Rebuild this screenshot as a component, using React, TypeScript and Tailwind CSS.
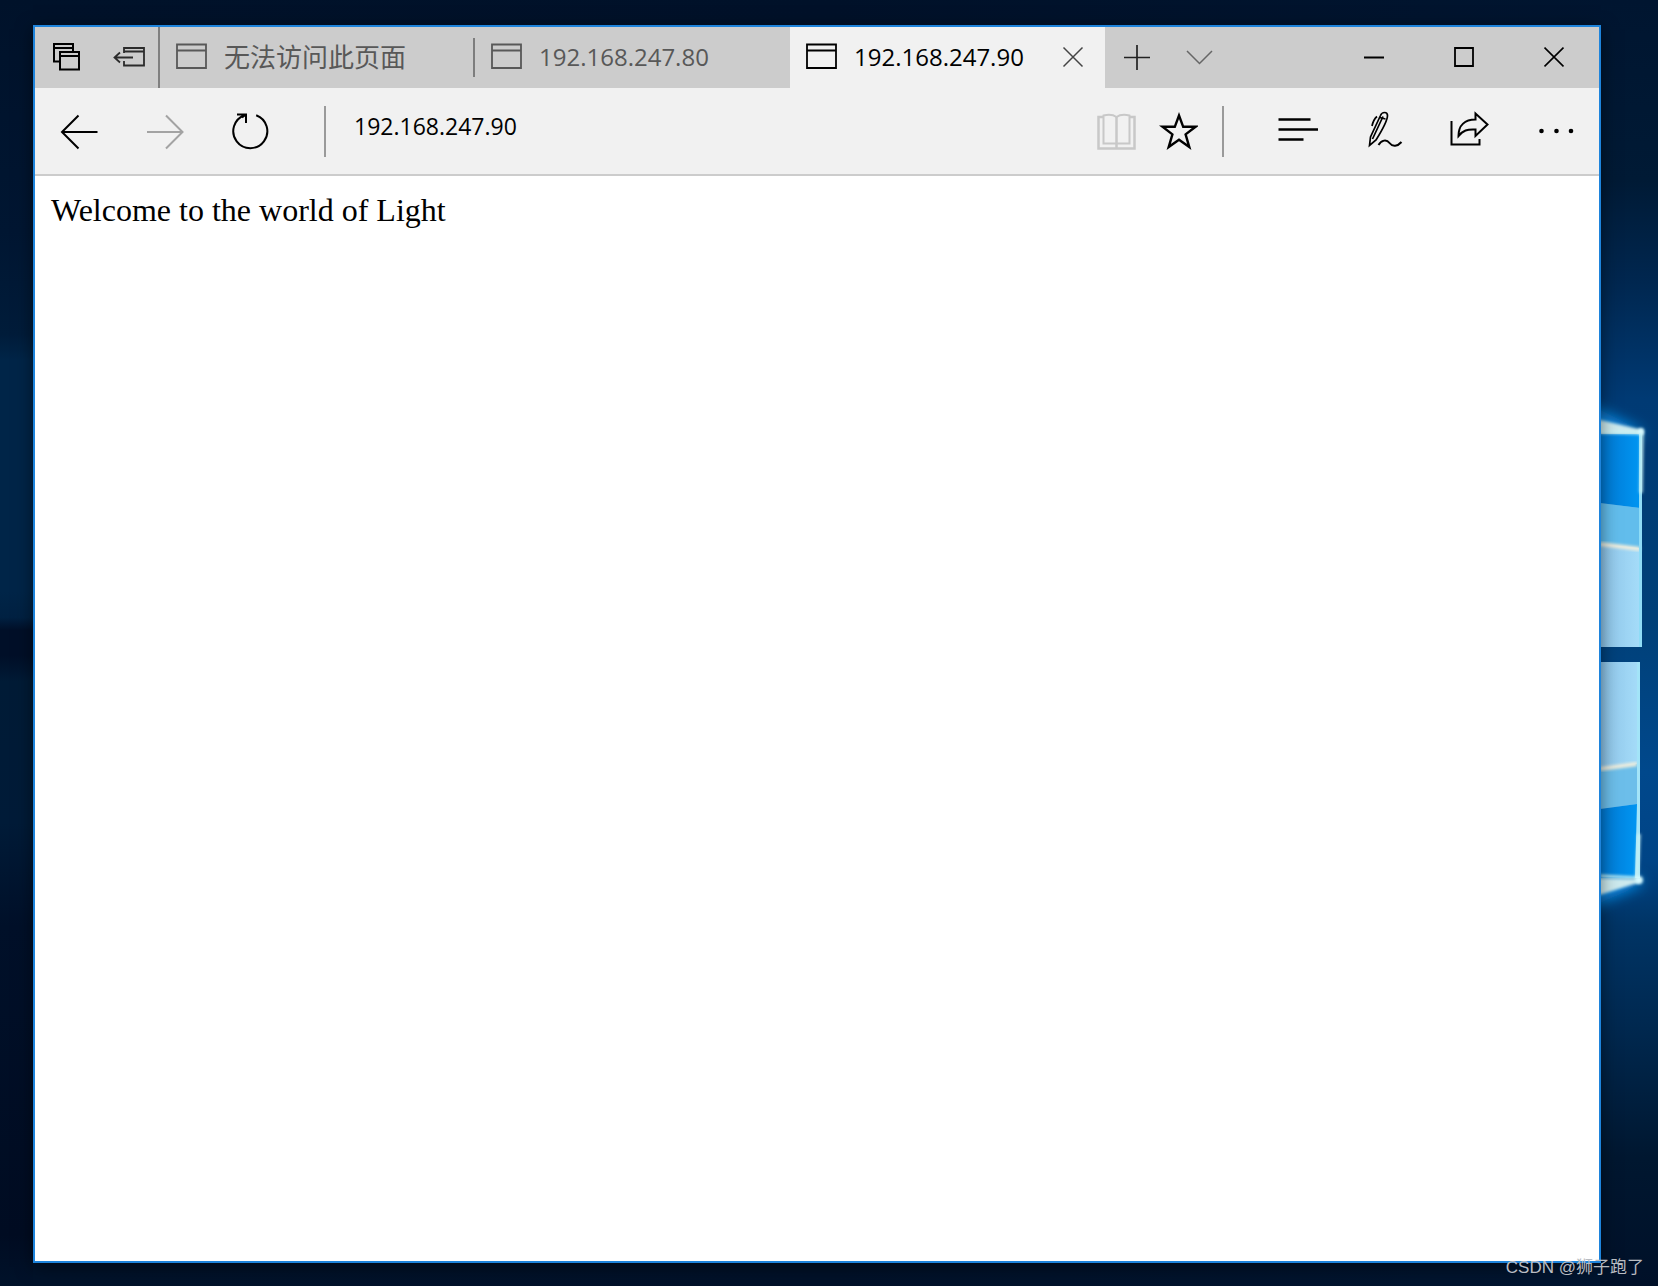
import React, { useState } from 'react';
import clsx from 'clsx';

const UI_FONT = "font-['Open_Sans','Noto_Sans_CJK_SC',sans-serif]";

const TABS = [
  { id: 'error', title: '无法访问此页面' },
  { id: 'host80', title: '192.168.247.80' },
  { id: 'host90', title: '192.168.247.90' },
];

interface IconProps {
  w?: number;
  h?: number;
  children: React.ReactNode;
}

// Stroke icon on its own pixel grid: 40x40 in the toolbar, 31 high in the title bar
const Icon: React.FC<IconProps> = ({ w = 40, h = 40, children }) => (
  <svg
    width={w}
    height={h}
    viewBox={`0 0 ${w} ${h}`}
    fill="none"
    stroke="currentColor"
    strokeWidth="2"
    className="shrink-0"
    aria-hidden="true"
  >
    {children}
  </svg>
);

interface BarButtonProps {
  label: string;
  className: string;
  disabled?: boolean;
  onClick?: () => void;
  children: React.ReactNode;
}

const BarButton: React.FC<BarButtonProps> = ({ label, className, disabled, onClick, children }) => (
  <button
    type="button"
    aria-label={label}
    disabled={disabled}
    onClick={onClick}
    className={clsx('flex h-full shrink-0 items-center justify-center', className)}
  >
    {children}
  </button>
);

const PageIcon = () => (
  <Icon w={32} h={31}>
    <path d="M1 2.500h29v23.500H1zM1 8.500h29" strokeWidth="1.8" />
  </Icon>
);

const TitleBar: React.FC<{ active: string; onSelect: (id: string) => void }> = ({ active, onSelect }) => (
  <div className="flex h-[61px] shrink-0 items-stretch bg-[#cccccc] text-black">
    <BarButton label="Tabs you've set aside" className="w-[62px]">
      <Icon w={32} h={31}>
        <path d="M9 19.500H4V2h19v7M4 6h19" />
        <path d="M10 10h19v17.500H10zM10 14h19" />
      </Icon>
    </BarButton>
    <BarButton label="Set these tabs aside" className="w-[61px] text-[#2b2b2b]">
      <Icon w={35} h={31}>
        <path d="M14 11V6h20v17.500H14V19M14 9.500h20M5 15.500h18M10 10.500l-5.500 5 5.500 5" strokeWidth="1.8" />
      </Icon>
    </BarButton>
    <div className="w-0.5 bg-[#808080]" />

    <div role="tablist" className="flex min-w-0">
      {TABS.map((tab, i) => {
        const isActive = tab.id === active;
        return (
          <div
            key={tab.id}
            className={clsx(
              'flex w-[315px] items-center',
              isActive ? 'bg-[#f1f1f1] text-black' : 'text-[#585858]',
            )}
          >
            <button
              type="button"
              role="tab"
              aria-selected={isActive}
              onClick={() => onSelect(tab.id)}
              className="flex h-full min-w-0 flex-1 items-center gap-4 pl-4 text-left"
            >
              <PageIcon />
              <span className={clsx('pb-0.5 leading-8 whitespace-nowrap', i === 0 ? 'text-[26px]' : 'text-[24px]')}>
                {tab.title}
              </span>
            </button>
            {isActive && (
              <button type="button" aria-label="Close tab" className="h-full pr-[21px] text-[#444]">
                <Icon w={22} h={31}>
                  <path d="M1.500 5.500l19 19M20.500 5.500l-19 19" strokeWidth="1.5" />
                </Icon>
              </button>
            )}
            {i === 0 && <div className="h-[39px] w-0.5 bg-[#7d7d7d]" />}
          </div>
        );
      })}
    </div>

    <BarButton label="New tab" className="w-[63px] text-[#222]">
      <Icon w={27} h={31}>
        <path d="M1 15.500h26M14 3v25" strokeWidth="1.7" />
      </Icon>
    </BarButton>
    <BarButton label="Show tab previews" className="w-[63px] text-[#666]">
      <Icon w={27} h={31}>
        <path d="M1 9l12.500 12.500L26 9" strokeWidth="1.5" />
      </Icon>
    </BarButton>

    <div className="flex-1" />

    <BarButton label="Minimize" className="w-[90px]">
      <Icon w={20} h={31}>
        <path d="M0 15.500h20" />
      </Icon>
    </BarButton>
    <BarButton label="Maximize" className="w-[90px]">
      <Icon w={20} h={31}>
        <path d="M1 6h18v18H1z" strokeWidth="1.8" />
      </Icon>
    </BarButton>
    <BarButton label="Close window" className="w-[90px]">
      <Icon w={20} h={31}>
        <path d="M.5 5.500l19 19M19.500 5.500l-19 19" strokeWidth="1.7" />
      </Icon>
    </BarButton>
  </div>
);

const Toolbar: React.FC = () => {
  const [address, setAddress] = useState('192.168.247.90');

  return (
    <div className="flex h-[88px] shrink-0 items-center border-b-2 border-[#cccccc] bg-[#f1f1f1] text-black">
      <BarButton label="Back" className="w-[86px]">
        <Icon>
          <path d="M3.500 21h36M20.500 4.500L4 21l16.500 16.500" />
        </Icon>
      </BarButton>
      <BarButton label="Forward" className="w-[86px] text-[#a3a3a3]" disabled>
        <Icon>
          <path d="M3 21h36M22 4.500L38.500 21 22 37.500" />
        </Icon>
      </BarButton>
      <BarButton label="Refresh" className="w-[86px]">
        <Icon>
          <path d="M26.200 4.200A17 17 0 1 1 14.400 4.200M7 3.500h9v8.500M16 3.500l-4 3" />
        </Icon>
      </BarButton>
      <div className="ml-[31px] h-[51px] w-0.5 shrink-0 bg-[#9a9a9a]" />
      <input
        type="text"
        aria-label="Address"
        value={address}
        onChange={(e) => setAddress(e.target.value)}
        className="h-full min-w-0 flex-1 bg-transparent pb-2.5 pl-7 text-[23px] leading-8 outline-none"
      />
      <BarButton label="Reading view" className="w-[62px] text-[#c8c8c8]" disabled>
        <Icon>
          <path d="M7 6H2.500v31.500h36V6H34M20.500 6v31.500" strokeWidth="2.5" />
          <path d="M20.500 6C17 3.500 12 3.500 7.500 4.500V32.500H33.500V4.500C29 3.500 24 3.500 20.500 6z" />
        </Icon>
      </BarButton>
      <BarButton label="Add to favorites" className="w-[62px]">
        <Icon>
          <path
            d="M21 4.500l4.200 11.300h12.300l-9.900 7.600 3.700 12.700L21 28.800l-10.300 7.300 3.700-12.700-9.900-7.600h12.300z"
            strokeWidth="2.4"
          />
        </Icon>
      </BarButton>
      <div className="mr-[31px] ml-[13px] h-[51px] w-0.5 shrink-0 bg-[#9a9a9a]" />
      <BarButton label="Hub" className="w-[86px]">
        <Icon>
          <path d="M.5 8.500h32M.5 18.500h39.500M.5 28.500h25" strokeWidth="2.4" />
        </Icon>
      </BarButton>
      <BarButton label="Make a web note" className="w-[86px]">
        <Icon>
          <path
            d="M5.500 34.500L6.500 26 16.500 4.500C18 .5 23.500.5 23.500 4.500 23.500 9 17 21 12 29zM15.500 6.500l6 1.500M13 5.500c-3 2.500-4 5-5 9.500M19 5.500L8.500 28"
            strokeWidth="1.7"
          />
          <path d="M14.500 34c3-5 8-6 11-2s8 3.500 12-1" />
        </Icon>
      </BarButton>
      <BarButton label="Share" className="w-[86px]">
        <Icon>
          <path d="M1.500 10v23.500h28V28" />
          <path d="M8.500 25C8.500 14 15 8.500 25.500 8.500V2.500L37.500 13.500 25.500 25V18.500C17 18 13 19.500 8.500 25z" />
        </Icon>
      </BarButton>
      <BarButton label="More" className="w-[86px]">
        <Icon>
          <g fill="currentColor" stroke="none">
            <circle cx="5.500" cy="20" r="2.300" />
            <circle cx="20.500" cy="20" r="2.300" />
            <circle cx="35" cy="20" r="2.300" />
          </g>
        </Icon>
      </BarButton>
    </div>
  );
};

// Light beam with the right edge of the logo panes, seen beside the window
const WallpaperLogo = () => (
  <svg
    viewBox="0 0 58 1286"
    preserveAspectRatio="xMaxYMid slice"
    className="absolute top-0 right-0 h-full w-[58px]"
    aria-hidden="true"
  >
    <defs>
      <linearGradient id="sky" x1="0" y1="0" x2="0" y2="1">
        <stop offset="0" stopColor="#001530" />
        <stop offset=".14" stopColor="#001a35" />
        <stop offset=".22" stopColor="#002750" />
        <stop offset=".31" stopColor="#003a74" />
        <stop offset=".48" stopColor="#004078" />
        <stop offset=".6" stopColor="#00488c" />
        <stop offset=".67" stopColor="#004486" />
        <stop offset=".72" stopColor="#003465" />
        <stop offset=".8" stopColor="#00284f" />
        <stop offset=".9" stopColor="#001730" />
        <stop offset="1" stopColor="#001028" />
      </linearGradient>
      <linearGradient id="pale" x1="0" y1="0" x2="1" y2="0">
        <stop offset="0" stopColor="#8dc4e8" />
        <stop offset="1" stopColor="#a5dcf9" />
      </linearGradient>
      <linearGradient id="blue" x1="0" y1="0" x2="1" y2="0">
        <stop offset="0" stopColor="#0078d2" />
        <stop offset="1" stopColor="#0095f2" />
      </linearGradient>
      <filter id="glow" x="-100%" y="-100%" width="300%" height="300%">
        <feGaussianBlur stdDeviation="7" />
      </filter>
      <filter id="soft" x="-50%" y="-50%" width="200%" height="200%">
        <feGaussianBlur stdDeviation="1.500" />
      </filter>
    </defs>
    <rect width="58" height="1286" fill="url(#sky)" />

    <path d="M-12 404L40 430 46 434-12 440zM-12 874L38 878 44 884-12 908z" fill="#0a8ce6" filter="url(#glow)" />
    <path d="M-4 419L43 430 43 435-4 434zM-4 878L38 879 41 882-4 896z" fill="#cdeaee" filter="url(#soft)" />

    <path d="M0 434h40v213H0z" fill="url(#pale)" />
    <path d="M0 503l40 5v40l-40-4z" fill="#62bdec" />
    <path d="M0 434h40v74l-40-5z" fill="url(#blue)" />
    <path d="M0 544l40 5" stroke="#f1eedd" strokeWidth="4" filter="url(#soft)" />
    <path d="M39 433h3v214h-3z" fill="#8fdcf6" />
    <path d="M0 432l42 1-1 60" fill="none" stroke="#c9f3f5" strokeWidth="3" filter="url(#soft)" />

    <path d="M0 662h39v216H0z" fill="url(#pale)" />
    <path d="M0 769l37-5v40l-37 5z" fill="#6cbeea" />
    <path d="M0 809l37-5v74H0z" fill="url(#blue)" />
    <path d="M0 769l37-5" stroke="#f1eedd" strokeWidth="4" filter="url(#soft)" />
    <path d="M37 662h3v216h-5l2-74z" fill="#a3e4f8" />
    <path d="M0 876l37 2 2-44" fill="none" stroke="#c9f3f5" strokeWidth="3" filter="url(#soft)" />

    <circle cx="41" cy="431" r="3" fill="#d8fbff" filter="url(#soft)" />
    <circle cx="39" cy="880" r="4" fill="#d8fbff" filter="url(#soft)" />
  </svg>
);

export default function App() {
  const [active, setActive] = useState('host90');

  return (
    <div
      className={clsx(
        'relative flex min-h-screen flex-col overflow-hidden bg-linear-to-r from-[#00122a] via-[#001129] to-[#001530] pt-[25px] pr-[57px] pb-[23px] pl-[33px]',
        UI_FONT,
      )}
    >
      <div className="absolute inset-y-0 left-0 w-[33px] bg-[linear-gradient(180deg,#00122a_0%,#001632_18%,#001c3a_26%,#002548_28%,#002548_46%,#002142_48%,#000f28_49%,#000f28_51%,#001b36_53%,#001b38_64%,#001029_72%,#000c22_96%,#00122a_100%)]" />
      <WallpaperLogo />

      <div className="relative flex flex-1 flex-col border-2 border-[#1e84dc] bg-white shadow-[0_4px_16px_rgba(0,0,0,0.5)]">
        <TitleBar active={active} onSelect={setActive} />
        <Toolbar />
        <main className="flex-1 p-4 font-['Liberation_Serif',serif] text-[32px] leading-9 text-black">
          Welcome to the world of Light
        </main>
      </div>

      <div className="absolute right-3.5 bottom-1.5 font-['Liberation_Sans','Noto_Sans_CJK_SC',sans-serif] text-[17px] leading-6 text-[#b9bcc2]">
        CSDN @狮子跑了
      </div>
    </div>
  );
}
